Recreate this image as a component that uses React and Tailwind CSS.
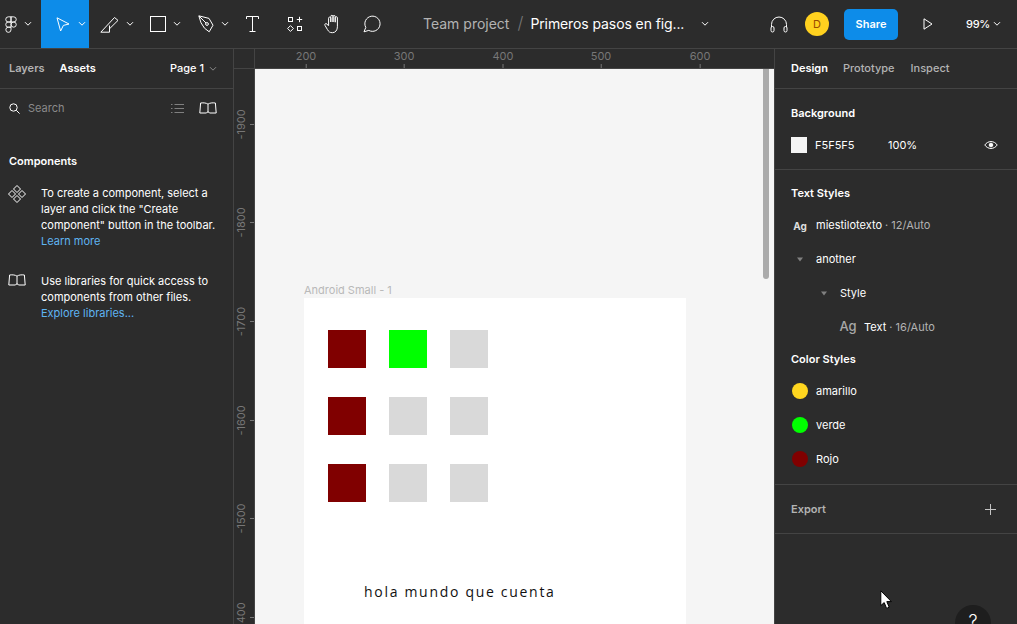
import React from "react";

const S = ({ w = 20, h = 20, vb, children, className = "" }) => (
  <svg width={w} height={h} viewBox={vb || `0 0 ${w} ${h}`} fill="none" stroke="currentColor" strokeWidth="1" className={"shrink-0 " + className}>
    {children}
  </svg>
);

const Chevron = ({ className = "text-white" }) => (
  <S w={8} h={6} className={className}><path d="M1 1.2 L4 4.2 L7 1.2" /></S>
);

const Figma = () => (
  <S w={12} h={17} vb="0 0 13 18" className="text-white">
    <path d="M6.5 .7H3.6a2.8 2.8 0 0 0 0 5.6h2.9zM6.5 .7h2.9a2.8 2.8 0 0 1 0 5.6H6.5zM6.5 6.3H3.6a2.8 2.8 0 0 0 0 5.6h2.9zM6.5 11.9H3.6a2.8 2.8 0 1 0 2.9 2.8z" />
    <circle cx="9.4" cy="9.1" r="2.8" />
  </S>
);
const Cursor = () => (
  <S w={14} h={15} className="text-white"><path d="M1 .8 L13 7 L7.4 8.4 L4.6 14 Z" strokeLinejoin="round" /></S>
);
const PenLine = () => (
  <S w={19} h={17} className="text-white"><path d="M.8 16.2 H9.5 V9.5 M.8 16.2 L14.5 1.5 L18 4.4 L9.5 12.8" /></S>
);
const Vector = () => (
  <S w={16} h={18} className="text-white">
    <path d="M.8 .8 L11 3.4 L15 10.2 L11.2 16.8 L6.5 13.2 L3 7.8 Z" strokeLinejoin="round" />
    <path d="M1 1 L8 8" />
    <circle cx="9" cy="9" r="1.4" />
  </S>
);
const TypeIcon = () => (
  <S w={13} h={16} className="text-white"><path d="M.5 3V.5H12.5V3M6.5 .5V15.5M3.5 15.5H9.5" /></S>
);
const Comps = () => (
  <S w={16} h={17} vb="0 0 16 17" className="text-white">
    <rect x="1.5" y="1.5" width="4" height="4" />
    <path d="M12.5 .8V6.2M9.8 3.5H15.2" />
    <path d="M3.5 9.6 L6.4 12.5 L3.5 15.4 L.6 12.5 Z" />
    <rect x="10.5" y="10.5" width="4" height="4" />
  </S>
);
const Hand = () => (
  <S w={18} h={20} className="text-white">
    <path d="M4.6 11.5V4.2a1.1 1.1 0 0 1 2.2 0V8M6.8 8V2.4a1.1 1.1 0 0 1 2.2 0V8M9 8V2.6a1.1 1.1 0 0 1 2.2 0V8.2M11.2 8.2V3.8a1.1 1.1 0 0 1 2.2 0v9c0 3.4-2 5.9-5 5.9-2.6 0-3.7-1-5-3.2L1 11.4c-.8-1.4 1-2.5 2-1.3l1.6 1.8" strokeLinejoin="round" />
  </S>
);
const Comment = () => (
  <S w={18} h={18} className="text-white"><path d="M1 16.8 L2.8 12.4 A7.6 7.6 0 1 1 5.8 15.4 Z" strokeLinejoin="round" /></S>
);
const Headphones = () => (
  <S w={18} h={17} className="text-white">
    <path d="M1.5 11V8.5a7.5 7.5 0 0 1 15 0V11" />
    <rect x="1" y="10.5" width="3" height="5.5" rx="1.5" />
    <rect x="14" y="10.5" width="3" height="5.5" rx="1.5" />
  </S>
);
const Play = () => (
  <S w={10} h={12} className="text-white"><path d="M1 .8 L9 6 L1 11.2 Z" strokeLinejoin="round" /></S>
);
const Search = () => (
  <S w={11} h={11} className="text-white"><circle cx="4.5" cy="4.5" r="3.7" /><path d="M7.3 7.3 L10.6 10.6" /></S>
);
const ListIcon = () => (
  <S w={13} h={11} className="text-[#808080]"><path d="M0 1.5H1.5M3.5 1.5H13M0 5.5H1.5M3.5 5.5H13M0 9.5H1.5M3.5 9.5H13" /></S>
);
const Book = ({ className = "text-white" }) => (
  <S w={18} h={12} className={className}>
    <path d="M9 2.2C7.4.9 4.6.6 1.6 1L.8 11H7.5a1.6 1.6 0 0 1 3 0H17.2L16.4 1C13.4.6 10.6.9 9 2.2ZM9 2.2V10" strokeLinejoin="round" />
  </S>
);
const Diamonds = () => (
  <S w={18} h={18} className="text-white">
    <path d="M9 .5 L12.5 4 L9 7.5 L5.5 4 Z M4 5.5 L7.5 9 L4 12.5 L.5 9 Z M14 5.5 L17.5 9 L14 12.5 L10.5 9 Z M9 10.5 L12.5 14 L9 17.5 L5.5 14 Z" />
  </S>
);
const Eye = () => (
  <S w={14} h={10} className="text-white">
    <path d="M.8 5C3.8 .4 10.2 .4 13.2 5 10.2 9.6 3.8 9.6 .8 5Z" /><circle cx="7" cy="5" r="1.8" fill="currentColor" />
  </S>
);
const Caret = () => (
  <svg width="6" height="5" viewBox="0 0 6 5" className="shrink-0"><path d="M0 .5H6L3 4.5Z" fill="#808080" /></svg>
);

const ToolBtn = ({ children, w, pad, gap = "gap-[7px]", active = false, chev = true }) => (
  <div className={`h-full flex items-center shrink-0 ${w} ${pad} ${gap} ${active ? "bg-[#0d8ce9]" : ""}`}>
    {children}
    {chev && <Chevron />}
  </div>
);

const hTicks = [[200, 51], [300, 149], [400, 248], [500, 346], [600, 445]];
const vTicks = [[-1900, 55], [-1800, 153], [-1700, 252], [-1600, 351], [-1500, 449], [-1400, 548]];

const SectionTitle = ({ children, className = "" }) => (
  <div className={"text-[11px] font-semibold leading-4 " + className}>{children}</div>
);

const StyleRow = ({ pad = "pl-[16px]", icon, children }) => (
  <div className={"h-[34px] flex items-center " + pad}>
    <div className="w-[18px] flex items-center justify-center shrink-0">{icon}</div>
    <div className="ml-[7px] text-[11px] leading-4 whitespace-nowrap">{children}</div>
  </div>
);

const Swatch = ({ c }) => <div className={"w-[16px] h-[16px] shrink-0 rounded-full " + c} />;

const tiles = ["bg-[#800000]", "bg-[#00ff00]", "bg-[#d9d9d9]", "bg-[#800000]", "bg-[#d9d9d9]", "bg-[#d9d9d9]", "bg-[#800000]", "bg-[#d9d9d9]", "bg-[#d9d9d9]"];

export default function App() {
  return (
    <div className="w-[1017px] h-[624px] overflow-hidden flex flex-col bg-[#2c2c2c] text-white font-['Inter',sans-serif] relative">
      {/* Toolbar */}
      <header className="h-[49px] shrink-0 border-b border-[#444] flex items-center">
        <ToolBtn w="w-[41px]" pad="pl-[5px]"><Figma /></ToolBtn>
        <ToolBtn w="w-[48px]" pad="pl-[15px]" gap="gap-[8px]" active><Cursor /></ToolBtn>
        <ToolBtn w="w-[48px]" pad="pl-[11px]"><PenLine /></ToolBtn>
        <ToolBtn w="w-[48px]" pad="pl-[13px]"><S w={16} h={16} className="text-white"><rect x=".5" y=".5" width="15" height="15" /></S></ToolBtn>
        <ToolBtn w="w-[48px]" pad="pl-[13px]"><Vector /></ToolBtn>
        <ToolBtn chev={false} w="w-[40px]" pad="pl-[13px]"><TypeIcon /></ToolBtn>
        <ToolBtn chev={false} w="w-[40px]" pad="pl-[14px]"><Comps /></ToolBtn>
        <ToolBtn chev={false} w="w-[40px]" pad="pl-[11px]"><Hand /></ToolBtn>
        <ToolBtn chev={false} w="w-[40px]" pad="pl-[10px]"><Comment /></ToolBtn>
        <div className="flex items-center ml-[30px] -mt-[1px] text-[14px] whitespace-nowrap">
          <span className="text-[#b3b3b3]">Team project</span>
          <span className="text-[#777] ml-[8px] mr-[7px] font-light text-[17px] leading-none">/</span>
          <span className="tracking-[-0.1px]">Primeros pasos en fig...</span>
          <span className="ml-[17px] flex"><Chevron /></span>
        </div>
        <div className="ml-auto flex items-center">
          <Headphones />
          <div className="w-[24px] h-[24px] ml-[17px] rounded-full bg-[#ffd11f] flex items-center justify-center text-[11px] text-[#9a4b00]">D</div>
          <div className="w-[54px] h-[31px] ml-[15px] rounded-[5px] bg-[#0d8ce9] flex items-center justify-center text-[11px] font-semibold">Share</div>
          <div className="w-[10px] ml-[25px] flex"><Play /></div>
          <div className="ml-[33px] mr-[16px] flex items-center gap-[5px] text-[11px] font-medium"><span className="w-[22px] tracking-[-0.3px] whitespace-nowrap">99%</span><Chevron /></div>
        </div>
      </header>

      <div className="flex-1 flex min-h-0">
        {/* Left panel */}
        <aside className="w-[234px] shrink-0 border-r border-[#444]">
          <div className="h-[40px] border-b border-[#444] flex items-center pl-[9px] pr-[16px] text-[11px] font-semibold">
            <span className="text-[#b3b3b3] mr-[15px]">Layers</span>
            <span>Assets</span>
            <span className="ml-auto font-medium mr-[5px]">Page 1</span>
            <Chevron className="text-[#8a8a8a]" />
          </div>
          <div className="h-[38px] flex items-center pl-[9px] pr-[16px]">
            <Search />
            <span className="ml-[8px] text-[11px] text-[#8a8a8a]">Search</span>
            <span className="ml-auto mr-[15px] flex"><ListIcon /></span>
            <Book />
          </div>
          <SectionTitle className="mt-[26px] ml-[9px] font-medium">Components</SectionTitle>
          <div className="mt-[16px] ml-[8px] flex text-[11px] leading-[16px]">
            <div className="w-[33px] shrink-0"><Diamonds /></div>
            <p className="whitespace-nowrap">
              To create a component, select a<br />layer and click the "Create<br />component" button in the toolbar.<br />
              <span className="text-[#5fb4f2]">Learn more</span>
            </p>
          </div>
          <div className="mt-[24px] ml-[8px] flex text-[11px] leading-[16px]">
            <div className="w-[33px] shrink-0 pt-[1px]"><Book /></div>
            <p className="whitespace-nowrap">
              Use libraries for quick access to<br />components from other files.<br />
              <span className="text-[#5fb4f2]">Explore libraries...</span>
            </p>
          </div>
        </aside>

        {/* Canvas + rulers */}
        <main className="w-[540px] shrink-0 flex flex-col min-h-0">
          <div className="h-[20px] shrink-0 flex border-b border-[#444]">
            <div className="w-[21px] shrink-0 border-r border-[#444]" />
            <div className="flex-1 relative">
              {hTicks.map(([n, x]) => (
                <div key={n} className="absolute top-0 h-full flex flex-col items-center -translate-x-1/2" style={{ left: x }}>
                  <span className="text-[11px] leading-[14px] text-[#777]">{n}</span>
                  <span className="w-px h-[4px] mt-auto bg-[#777]" />
                </div>
              ))}
            </div>
          </div>
          <div className="flex-1 flex min-h-0">
            <div className="w-[21px] shrink-0 border-r border-[#444] relative">
              {vTicks.map(([n, y]) => (
                <div key={n} className="absolute right-0 flex items-center h-[12px] -translate-y-1/2" style={{ top: y }}>
                  <span className="text-[11px] leading-none text-[#777] -rotate-90 whitespace-nowrap w-[14px] flex justify-center">{n}</span>
                  <span className="ml-[2px] w-[4px] h-px bg-[#777]" />
                </div>
              ))}
            </div>
            <div className="flex-1 bg-[#f5f5f5] relative overflow-hidden">
              <div className="absolute left-[49px] top-[213px] text-[11px] leading-4 text-[#b9b9b9] whitespace-nowrap">Android Small - 1</div>
              <div className="absolute left-[49px] top-[229px] w-[382px] h-[400px] bg-white pt-[32px] pl-[24px]">
                <div className="grid grid-cols-[38px_38px_38px] auto-rows-[38px] gap-x-[23px] gap-y-[29px]">
                  {tiles.map((c, i) => <div key={i} className={c} />)}
                </div>
                <div className="mt-[80px] ml-[36px] text-[14px] leading-5 tracking-[1.7px] text-[#111] font-['Open_Sans',sans-serif] whitespace-nowrap">hola mundo que cuenta</div>
              </div>
              <div className="absolute right-[5px] top-0 w-[6px] h-[210px] rounded-b-full bg-[#ababab]" />
            </div>
          </div>
        </main>

        {/* Right panel */}
        <aside className="flex-1 border-l border-[#444] bg-[#2c2c2c] relative min-w-0">
          <div className="h-[40px] border-b border-[#444] flex items-center pl-[16px] text-[11px] font-medium">
            <span className="font-semibold">Design</span>
            <span className="text-[#b3b3b3] ml-[15px]">Prototype</span>
            <span className="text-[#b3b3b3] ml-[16px]">Inspect</span>
          </div>
          <div className="h-[81px] border-b border-[#444] px-[16px] pt-[16px]">
            <SectionTitle>Background</SectionTitle>
            <div className="mt-[16px] flex items-center text-[11px]">
              <div className="w-[16px] h-[16px] bg-[#f5f5f5]" />
              <span className="ml-[8px] w-[73px]">F5F5F5</span>
              <span>100%</span>
              <span className="ml-auto mr-[3px] flex"><Eye /></span>
            </div>
          </div>
          <div className="h-[315px] border-b border-[#444] pt-[15px]">
            <SectionTitle className="ml-[16px]">Text Styles</SectionTitle>
            <div className="mt-[7px]">
              <StyleRow icon={<span className="text-[10px] font-bold text-[#ddd] mt-[2px]">Ag</span>}>miestilotexto <span className="text-[#b3b3b3]">· 12/Auto</span></StyleRow>
              <StyleRow icon={<Caret />}>another</StyleRow>
              <StyleRow pad="pl-[40px]" icon={<Caret />}>Style</StyleRow>
              <StyleRow pad="pl-[64px]" icon={<span className="text-[13px] font-medium text-[#a8a8a8]">Ag</span>}>Text <span className="text-[#b3b3b3]">· 16/Auto</span></StyleRow>
            </div>
            <SectionTitle className="ml-[16px] mt-[7px]">Color Styles</SectionTitle>
            <div className="mt-[7px]">
              <StyleRow icon={<Swatch c="bg-[#ffd61f]" />}>amarillo</StyleRow>
              <StyleRow icon={<Swatch c="bg-[#00ff00]" />}>verde</StyleRow>
              <StyleRow icon={<Swatch c="bg-[#800000]" />}>Rojo</StyleRow>
            </div>
          </div>
          <div className="h-[49px] border-b border-[#444] flex items-center pl-[16px] pr-[21px]">
            <span className="text-[11px] font-semibold text-[#b3b3b3]">Export</span>
            <S w={11} h={11} className="ml-auto text-[#c4c4c4]"><path d="M5.5 0V11M0 5.5H11" /></S>
          </div>
          <div className="absolute left-[180px] top-[556px] w-[36px] h-[36px] rounded-full bg-[#1e1e1e] flex justify-center pt-[7px] text-[18px] font-light leading-5 text-white">?</div>
          {/* Mouse pointer */}
          <svg width="13" height="20" viewBox="0 0 13 20" className="absolute left-[105px] top-[541px]">
            <path d="M.8 .8V15.6L4.2 12.6L6.6 18.4L9.2 17.2L6.8 11.6H11.4Z" fill="#fff" stroke="#000" strokeWidth="1" />
          </svg>
        </aside>
      </div>
    </div>
  );
}
